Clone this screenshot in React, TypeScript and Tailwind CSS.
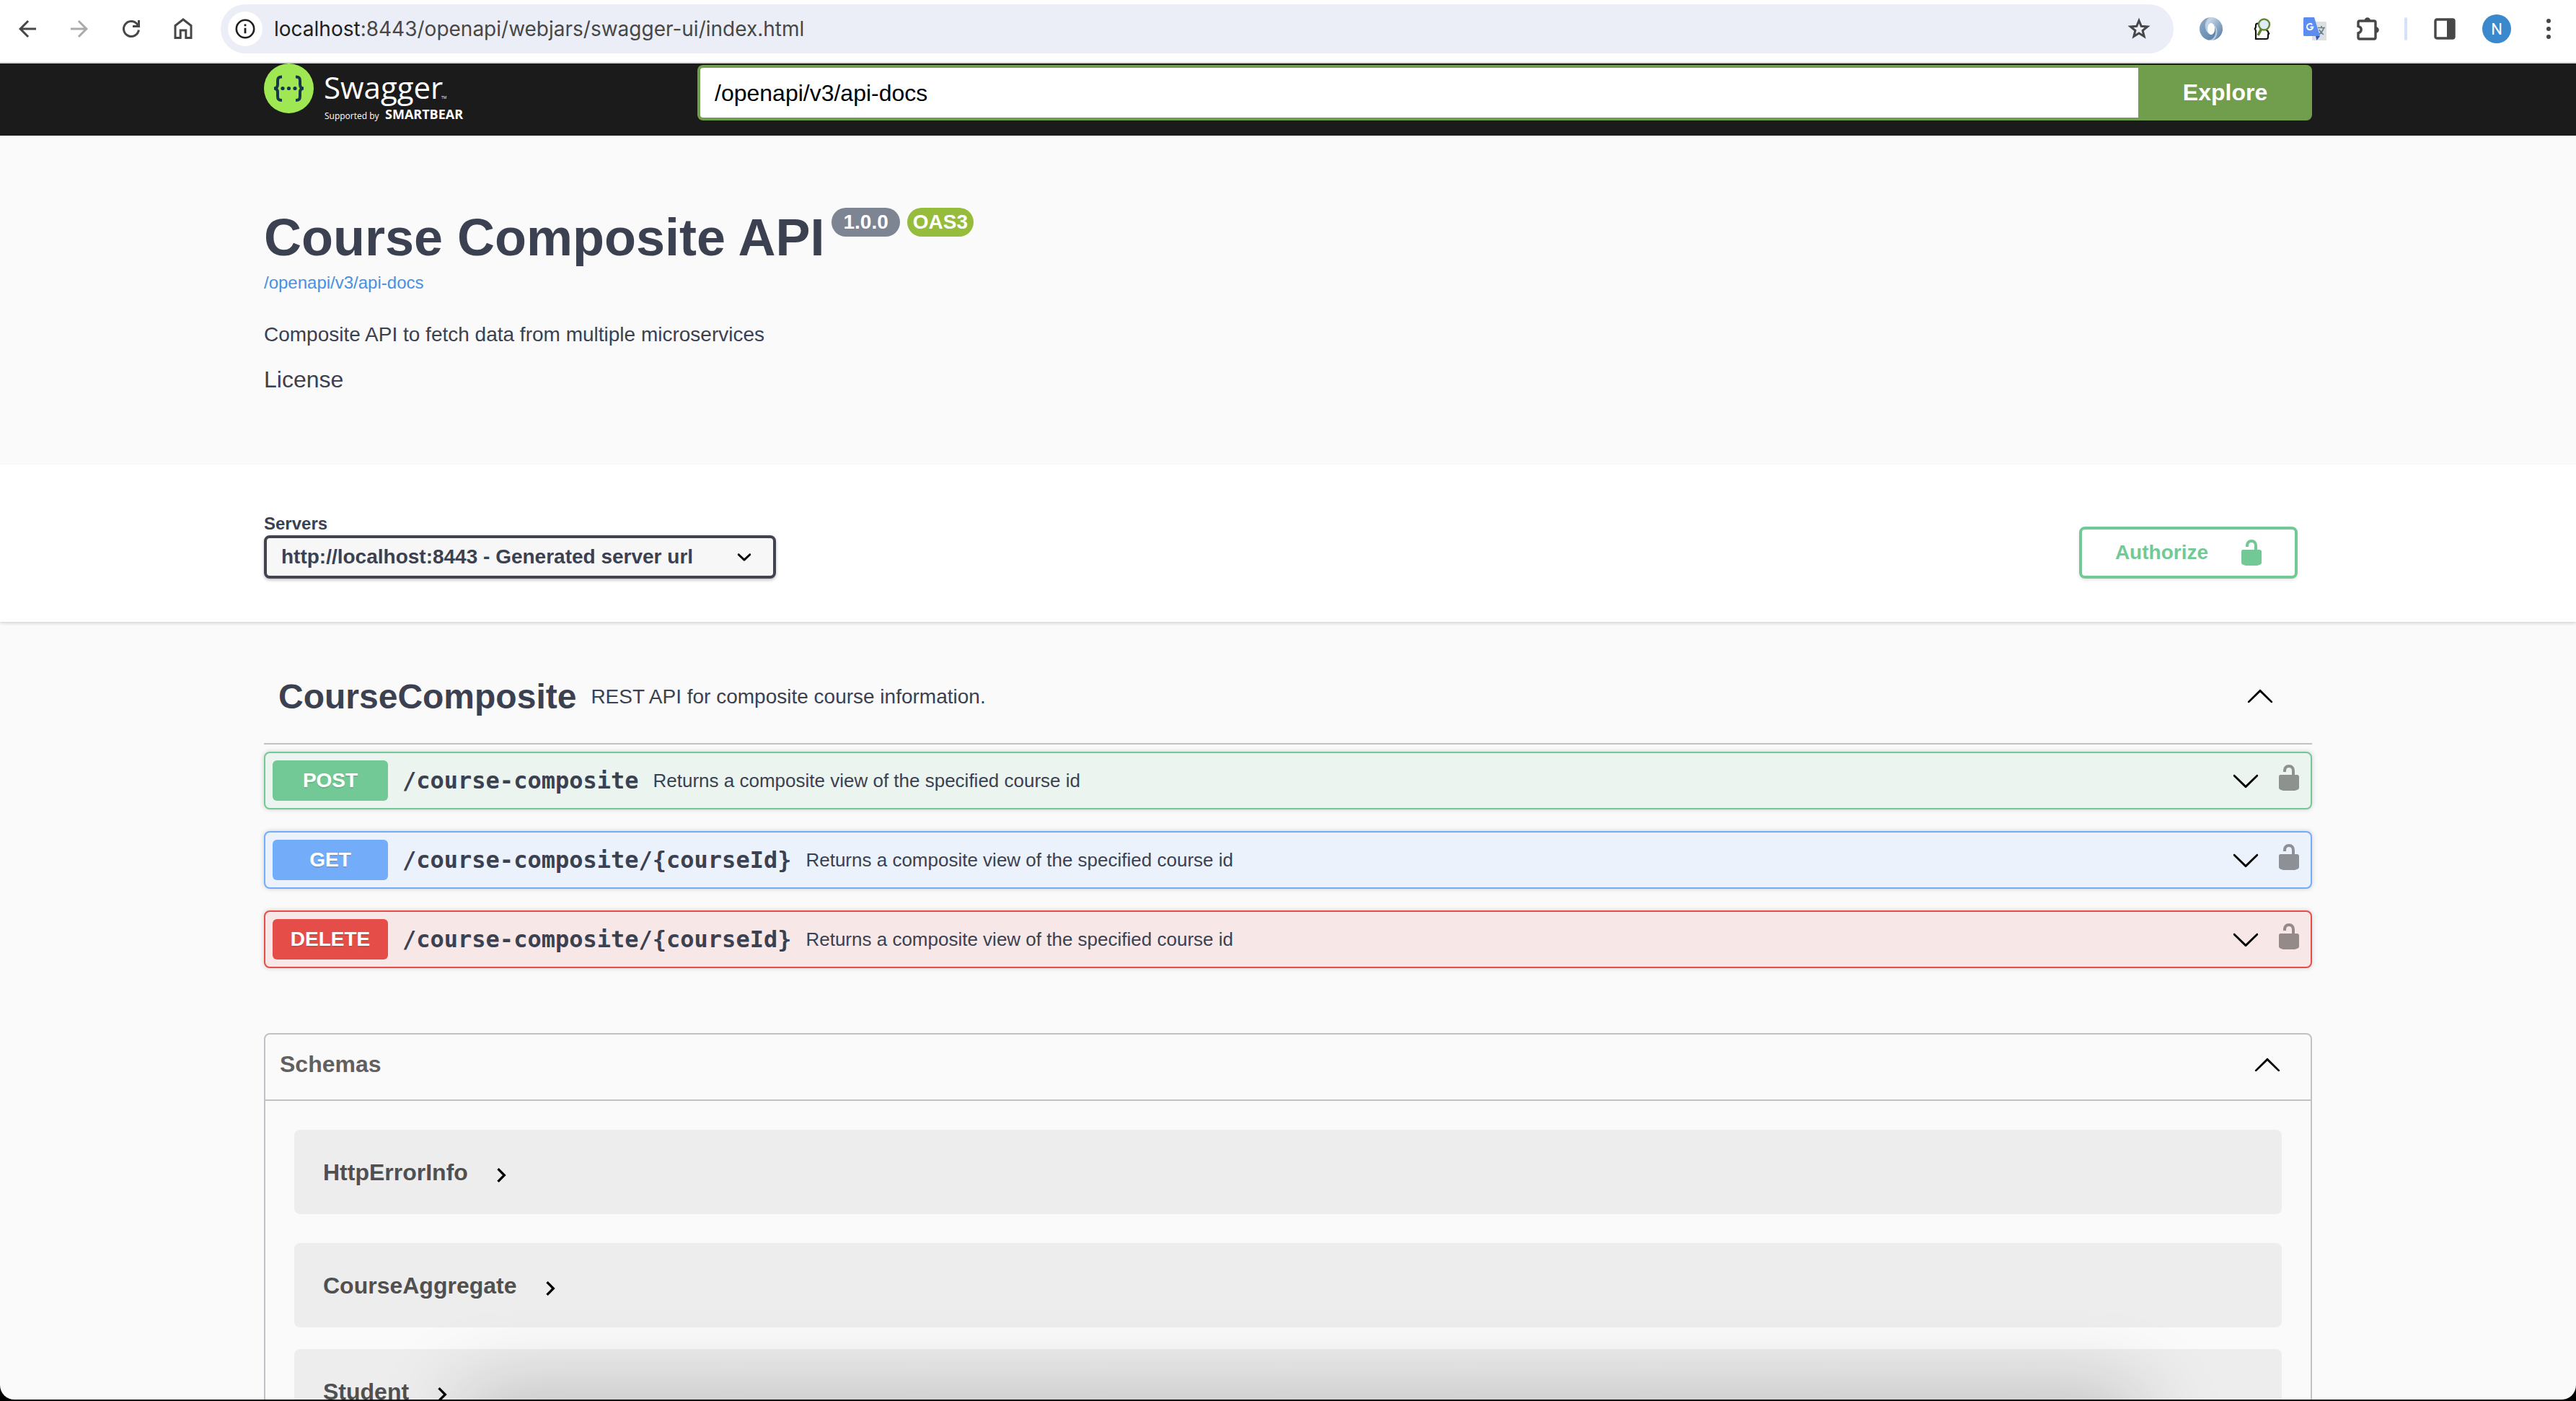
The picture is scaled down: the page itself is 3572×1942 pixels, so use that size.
import React from "react";

const UNLOCK =
  "M15.8 8H14V5.6C14 2.703 12.665 1 10 1 7.334 1 6 2.703 6 5.6V6h2v-.801C8 3.754 8.797 3 10 3c1.203 0 2 .754 2 2.199V8H4c-.553 0-1 .646-1 1.199V17c0 .549.428 1.139.951 1.307l1.197.387C5.672 18.861 6.55 19 7.1 19h5.8c.549 0 1.428-.139 1.951-.307l1.196-.387c.524-.167.953-.757.953-1.306V9.199C17 8.646 16.352 8 15.8 8z";
const ARROW_UP =
  "M17.418 14.908c.272.268.709.268.979 0s.271-.701 0-.969l-7.908-7.83c-.27-.268-.707-.268-.979 0l-7.908 7.83c-.27.268-.27.701 0 .969.271.268.709.268.979 0L10 7.767l7.418 7.141z";
const ARROW_DOWN =
  "M17.418 6.109c.272-.268.709-.268.979 0s.271.701 0 .969l-7.908 7.83c-.27.268-.707.268-.979 0l-7.908-7.83c-.27-.268-.27-.701 0-.969.271-.268.709-.268.979 0L10 13.25l7.418-7.141z";

function Glyph({ d, className = "" }: { d: string; className?: string }) {
  return (
    <svg viewBox="0 0 20 20" aria-hidden="true" className={`size-10 shrink-0 fill-current ${className}`}>
      <path d={d} />
    </svg>
  );
}

function ToolButton({ label, children }: { label: string; children: React.ReactNode }) {
  return (
    <button type="button" aria-label={label} className="flex w-[72px] shrink-0 items-center justify-center text-[#474747]">
      {children}
    </button>
  );
}

function BrowserBar() {
  return (
    <header className="flex h-[88px] shrink-0 items-center border-b-2 border-[#dadada] bg-white pb-[6px]">
      <nav aria-label="Browser" className="flex pl-[2px]">
        <ToolButton label="Back">
          <svg viewBox="0 0 24 24" className="size-9 fill-current">
            <path d="M20 11H7.83l5.59-5.59L12 4l-8 8 8 8 1.41-1.41L7.83 13H20v-2z" />
          </svg>
        </ToolButton>
        <ToolButton label="Forward">
          <svg viewBox="0 0 24 24" className="size-9 fill-[#ababab]">
            <path d="M12 4l-1.41 1.41L16.17 11H4v2h12.17l-5.58 5.59L12 20l8-8z" />
          </svg>
        </ToolButton>
        <ToolButton label="Reload">
          <svg viewBox="0 0 36 36" className="size-9 fill-none stroke-current" strokeWidth="3">
            <path d="M28.4 19.5A10.5 10.5 0 1 1 26 11.2l2 2.4" />
            <path d="M28.5 6v8.5H20" />
          </svg>
        </ToolButton>
        <ToolButton label="Home">
          <svg viewBox="0 0 36 36" className="size-9 fill-none stroke-current" strokeWidth="3">
            <path d="M7 30.500V13.600L18 5l11 8.600V30.500h-7.200V20h-7.600v10.500z" />
          </svg>
        </ToolButton>
      </nav>
      <div className="ml-4 flex h-[68px] flex-1 items-center rounded-full bg-[#ebeef6] pl-[10px] pr-8">
        <button type="button" aria-label="View site information" className="flex size-12 items-center justify-center rounded-full bg-white">
          <svg viewBox="0 0 28 28" className="size-7 fill-none stroke-[#1f1f1f]">
            <circle cx="14" cy="14" r="12.200" strokeWidth="2.600" />
            <path d="M14 12.800v7.400M14 7.400v2.800" strokeWidth="2.800" />
          </svg>
        </button>
        <div className="ml-4 flex-1 font-['Inter','Liberation_Sans',sans-serif] text-[28px] leading-9 text-[#474747]">
          <span className="text-[#1f1f1f]">localhost</span>:8443/openapi/webjars/swagger-ui/index.html
        </div>
        <button type="button" aria-label="Bookmark this page" className="text-[#474747]">
          <svg viewBox="0 0 32 32" className="size-8 fill-none stroke-current" strokeWidth="3">
            <path d="M16 4.500l3.200 7.800 8.500.6-6.600 5.400 2.100 8.300L16 22.100l-7.200 4.500 2.100-8.300-6.600-5.400 8.500-.6z" />
          </svg>
        </button>
      </div>
      <div className="flex items-center pl-4 pr-[2px]">
        <ToolButton label="JSON Viewer">
          <svg viewBox="0 0 32 32" className="size-8">
            <defs>
              <linearGradient id="ringA" x1="0" y1="0" x2="1" y2="1">
                <stop offset="0" stopColor="#8fabc8" />
                <stop offset="1" stopColor="#5c80a8" />
              </linearGradient>
              <linearGradient id="ringB" x1="1" y1="1" x2="0" y2="0">
                <stop offset="0" stopColor="#4f76a1" />
                <stop offset="1" stopColor="#dbe7f1" />
              </linearGradient>
            </defs>
            <circle cx="16" cy="16" r="16" fill="#b9cde0" />
            <path d="M12 31.500A16 16 0 0 1 13 .3C6 5 6 17 12 22c5 4 10 0 9-8 4 8-1 18-9 17.500z" fill="url(#ringA)" />
            <path d="M20 .5A16 16 0 0 1 19 31.700C26 27 26 15 20 10c-5-4-10 0-9 8C7 10 12 0 20 .5z" fill="url(#ringB)" />
            <ellipse cx="16" cy="16" rx="5" ry="8" fill="#fff" />
          </svg>
        </ToolButton>
        <ToolButton label="JSON Finder">
          <svg viewBox="0 0 32 32" className="size-8 fill-none">
            <path d="M9 8.500c-3 0-3 1-3 4 0 2 0 3-2 3.500 2 .5 2 1.500 2 3.500V30h14c3 0 3-1 3-4s0-3 2-3.500c-2-.5-2-1-2-2 0-2-1-2.500-3-2.500" stroke="#111" strokeWidth="2.200" />
            <path d="M13.500 16.500L9 25" stroke="#5d7f2e" strokeWidth="3.600" />
            <circle cx="17.500" cy="10" r="7.500" fill="#e2e9f7" stroke="#5d8a2f" strokeWidth="2.400" />
          </svg>
        </ToolButton>
        <ToolButton label="Google Translate">
          <svg viewBox="0 0 32 32" className="size-8">
            <rect x="12" y="6" width="20" height="26" rx="1.500" fill="#dedfe0" />
            <path d="M20 14.500h10M25 12v2.500M28 15c-1 4-4 7-7 9M22 17c1 3 4 5 6 7" stroke="#67808c" strokeWidth="1.700" fill="none" />
            <path d="M17 26l1.500 6 4.500-6z" fill="#3556b8" />
            <path d="M1.500 0H15l8 26H1.500A1.500 1.500 0 0 1 0 24.500v-23A1.500 1.500 0 0 1 1.500 0z" fill="#5b8def" />
            <path d="M12.200 10.200A4.200 4.200 0 1 0 13.300 13.600H9.500" stroke="#fff" strokeWidth="2" fill="none" />
          </svg>
        </ToolButton>
        <ToolButton label="Extensions">
          <svg viewBox="0 0 36 36" className="size-9">
            <path
              d="M6 9.200C6 8 6.800 7 8 7h20c1.200 0 2 .8 2 2v21c0 1.200-.8 2-2 2H8c-1.200 0-2-.8-2-2v-6.200c5.600-1.400 5.600-8 0-9.400z"
              fill="none"
              stroke="currentColor"
              strokeWidth="3.400"
            />
            <path d="M14.500 6.500a4.300 4.300 0 0 1 8.600 0zM30.500 15.200a4.300 4.300 0 0 1 0 8.600z" fill="currentColor" />
          </svg>
        </ToolButton>
        <div className="mx-4 h-8 w-1 rounded-full bg-[#d6e2fa]" />
        <ToolButton label="Side panel">
          <svg viewBox="0 0 30 30" className="size-[30px]">
            <rect x="2" y="2" width="26" height="26" rx="2" fill="none" stroke="currentColor" strokeWidth="3.400" />
            <path d="M18 2h10v26H18z" fill="currentColor" />
          </svg>
        </ToolButton>
        <ToolButton label="Profile">
          <span className="flex size-10 items-center justify-center rounded-full bg-[#3a89cc] font-['Roboto',sans-serif] text-[22px] text-white">N</span>
        </ToolButton>
        <ToolButton label="Menu">
          <svg viewBox="0 0 8 28" className="h-7 w-2 fill-current">
            <circle cx="4" cy="3" r="3" />
            <circle cx="4" cy="14" r="3" />
            <circle cx="4" cy="25" r="3" />
          </svg>
        </ToolButton>
      </div>
    </header>
  );
}

function SwaggerLogo() {
  return (
    <a href="#top" aria-label="Swagger" className="block w-[601px] shrink-0">
      <svg viewBox="0 0 300 84" className="h-[84px] w-[300px]">
        <circle cx="34.500" cy="34.500" r="34.500" fill="#9fe854" />
        <g fill="none" stroke="#173647" strokeWidth="4">
          <path d="M25 18.500c-5 0-6 1.500-6 6v4.500c0 3.500-1.500 5.500-5 5.500 3.500 0 5 2 5 5.500V45c0 4.500 1 6 6 6" />
          <path d="M44 18.500c5 0 6 1.500 6 6v4.500c0 3.500 1.500 5.500 5 5.500-3.500 0-5 2-5 5.500V45c0 4.500-1 6-6 6" />
        </g>
        <g fill="#173647">
          <circle cx="26" cy="34.500" r="2.600" />
          <circle cx="34.500" cy="34.500" r="2.600" />
          <circle cx="43" cy="34.500" r="2.600" />
        </g>
        <g fill="#fff" fontFamily="'Open Sans', sans-serif">
          <text x="83" y="49" fontSize="42">Swagger</text>
          <text x="246" y="49" fontSize="5">TM</text>
          <text x="84" y="77" fontSize="12">Supported by</text>
          <text x="168" y="77" fontSize="18" fontWeight="700">SMARTBEAR</text>
        </g>
      </svg>
    </a>
  );
}

function TopBar() {
  return (
    <div id="top" className="shrink-0 bg-[#1b1b1b]">
      <div className="mx-auto flex h-[100px] max-w-[2920px] px-10">
        <SwaggerLogo />
        <form className="mt-[2px] flex h-[77px] flex-1" onSubmit={(e) => e.preventDefault()}>
          <input
            aria-label="API definition URL"
            defaultValue="/openapi/v3/api-docs"
            className="min-w-0 flex-1 rounded-l-lg border-4 border-r-0 border-[#719e4c] bg-white px-5 text-[32px] text-black outline-none"
          />
          <button type="submit" className="w-[241px] rounded-r-lg bg-[#719e4c] pb-[2px] text-[32px] font-bold text-white">
            Explore
          </button>
        </form>
      </div>
    </div>
  );
}

function Info() {
  return (
    <section className="mx-auto max-w-[2920px] px-10 pb-25 pt-25 text-[#3b4151]">
      <div className="flex items-start gap-[10px]">
        <h1 className="text-[72px] font-bold leading-[82px]">Course Composite API</h1>
        <span className="flex h-10 items-center rounded-full bg-[#7d8492] px-4 text-[28px] font-bold text-white">1.0.0</span>
        <span className="flex h-10 items-center rounded-full bg-[#95bc3a] px-2 text-[28px] font-bold text-white">OAS3</span>
      </div>
      <a href="#docs" className="mt-1 block text-2xl leading-9 text-[#4990e2]">
        /openapi/v3/api-docs
      </a>
      <p className="mt-[38px] text-[28px] leading-8">Composite API to fetch data from multiple microservices</p>
      <p className="mt-7 text-[32px] leading-9">License</p>
    </section>
  );
}

function SchemeBar() {
  return (
    <section className="bg-white shadow-[0_2px_4px_rgba(0,0,0,0.15)]">
      <div className="mx-auto flex max-w-[2920px] items-end justify-between px-10 pb-[60px] pt-[68px]">
        <div className="w-[710px]">
          <label htmlFor="servers" className="mb-[2px] block text-2xl font-bold leading-7 text-[#3b4151]">
            Servers
          </label>
          <div className="relative">
            <select
              id="servers"
              className="h-[60px] w-full appearance-none rounded-lg border-4 border-[#41444e] bg-[#f7f7f7] pl-5 pr-20 text-[28px] font-bold text-[#3b4151] shadow-[0_2px_4px_rgba(0,0,0,0.25)]"
            >
              <option>http://localhost:8443 - Generated server url</option>
            </select>
            <svg viewBox="0 0 20 20" aria-hidden="true" className="pointer-events-none absolute right-6 top-[10px] size-10">
              <path d="M13.418 7.859c.271-.268.709-.268.978 0 .27.268.272.701 0 .969l-3.908 3.830c-.27.268-.707.268-.979 0l-3.908-3.830c-.27-.267-.27-.701 0-.969.271-.268.709-.268.978 0L10 11l3.418-3.141z" />
            </svg>
          </div>
        </div>
        <button
          type="button"
          className="mr-5 flex h-[72px] items-center rounded-lg border-4 border-[#73c995] pl-[46px] pr-10 text-[28px] font-bold text-[#73c995] shadow-[0_2px_4px_rgba(0,0,0,0.1)]"
        >
          Authorize
          <Glyph d={UNLOCK} className="ml-10" />
        </button>
      </div>
    </section>
  );
}

const operations = [
  { method: "POST", path: "/course-composite", box: "border-[#73c995] bg-[#ebf4ef]", badge: "bg-[#73c995]" },
  { method: "GET", path: "/course-composite/{courseId}", box: "border-[#73adf9] bg-[#ebf2fb]", badge: "bg-[#73adf9]" },
  { method: "DELETE", path: "/course-composite/{courseId}", box: "border-[#e54e48] bg-[#f8e7e7]", badge: "bg-[#e54e48]" },
];

function Operations() {
  return (
    <section className="pt-10">
      <div className="flex h-[130px] items-center border-b-2 border-[#c1c2c7] pl-5 pr-[52px] text-[#3b4151]">
        <h2 className="text-5xl font-bold leading-[56px]">CourseComposite</h2>
        <p className="ml-5 flex-1 text-[28px] leading-8">REST API for composite course information.</p>
        <button type="button" aria-label="Collapse CourseComposite" className="pb-1 text-black">
          <Glyph d={ARROW_UP} />
        </button>
      </div>
      <div className="mt-[10px] flex flex-col gap-[30px]">
        {operations.map((op) => (
          <div
            key={op.method}
            className={`flex h-20 items-center rounded-lg border-2 px-[10px] shadow-[0_0_6px_rgba(0,0,0,0.19)] ${op.box}`}
          >
            <span
              className={`flex h-14 w-40 items-center justify-center rounded-md text-[28px] font-bold text-white [text-shadow:0_2px_0_rgba(0,0,0,0.1)] ${op.badge}`}
            >
              {op.method}
            </span>
            <span className="ml-5 font-['DejaVu_Sans_Mono',monospace] text-[32px] font-bold leading-10 text-[#3b4151]">{op.path}</span>
            <span className="ml-5 flex-1 text-[26px] leading-8 text-[#3b4151]">Returns a composite view of the specified course id</span>
            <button type="button" aria-label={`Expand ${op.method} ${op.path}`} className="text-black">
              <Glyph d={ARROW_DOWN} />
            </button>
            <button type="button" aria-label={`Authorization for ${op.method} ${op.path}`} className="ml-5 pb-2 text-black/40">
              <Glyph d={UNLOCK} />
            </button>
          </div>
        ))}
      </div>
    </section>
  );
}

function Model({ name, className }: { name: string; className: string }) {
  return (
    <button
      type="button"
      className={`flex h-[117px] w-full items-center rounded-lg bg-black/5 px-10 text-left text-[32px] font-bold leading-9 text-[#505050] ${className}`}
    >
      {name}
      <svg viewBox="0 0 24 24" aria-hidden="true" className="ml-[26px] mt-2 size-10 fill-black">
        <path d="M10 6L8.590 7.410 13.170 12l-4.580 4.590L10 18l6-6z" />
      </svg>
    </button>
  );
}

function Schemas() {
  return (
    <section className="mt-[90px] rounded-lg border-2 border-[#c1c2c7]">
      <div className="flex items-center border-b-2 border-[#c1c2c7] pb-[31px] pl-5 pr-10 pt-[23px]">
        <h3 className="flex-1 text-[32px] font-bold leading-9 text-[#606060]">Schemas</h3>
        <button type="button" aria-label="Collapse Schemas" className="-my-1">
          <Glyph d={ARROW_UP} />
        </button>
      </div>
      <div className="px-10 pb-10 pt-10">
        <Model name="HttpErrorInfo" className="mb-10" />
        <Model name="CourseAggregate" className="mb-[30px]" />
        <Model name="Student" className="" />
      </div>
    </section>
  );
}

export default function App() {
  return (
    <div className="h-screen bg-black pb-[2px] font-['Liberation_Sans',Arial,sans-serif]">
      <div className="relative flex h-full flex-col overflow-hidden rounded-b-[20px] bg-[#fafafa]">
        <BrowserBar />
        <TopBar />
        <main className="min-h-0 flex-1 overflow-hidden">
          <Info />
          <SchemeBar />
          <div className="mx-auto max-w-[2920px] px-10">
            <Operations />
            <Schemas />
          </div>
        </main>
        <div className="pointer-events-none absolute left-[18%] right-[17%] top-full h-20 shadow-[0_0_120px_rgba(0,0,0,0.28)]" />
      </div>
    </div>
  );
}
